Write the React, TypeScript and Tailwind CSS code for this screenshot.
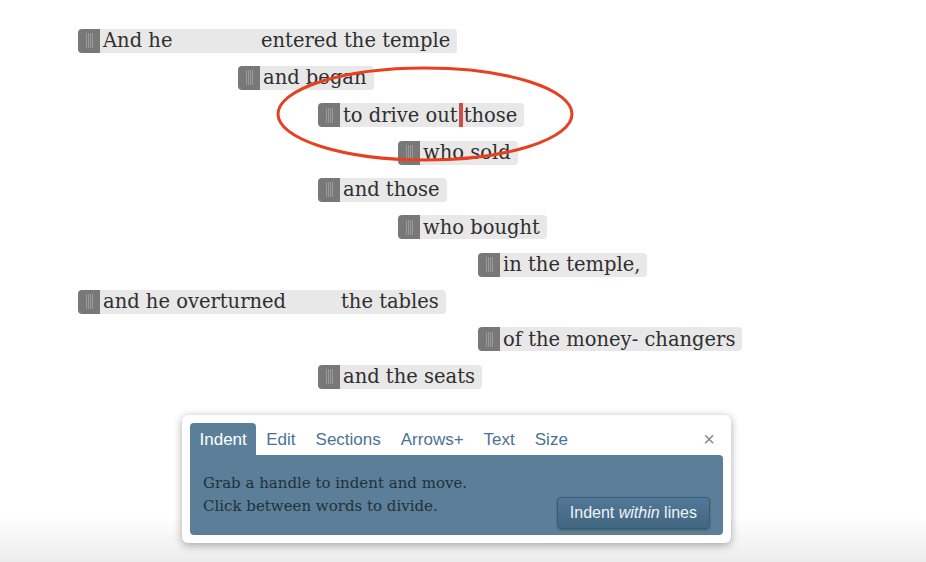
import React from "react";

const serif = { fontFamily: '"DejaVu Serif", Georgia, serif' };

function Handle() {
  return (
    <span className="flex h-6 w-[22px] shrink-0 items-center justify-center gap-px rounded-l-[4px] bg-[#787878]">
      <span className="h-[15px] w-px bg-[#9a9a9a]" />
      <span className="h-[15px] w-px bg-[#9a9a9a]" />
      <span className="h-[15px] w-px bg-[#9a9a9a]" />
      <span className="h-[15px] w-px bg-[#9a9a9a]" />
    </span>
  );
}

type Row = { level: number; parts: { text: React.ReactNode; w?: string }[] };

const rows: Row[] = [
  { level: 0, parts: [{ text: "And he", w: "w-[158px]" }, { text: "entered the temple" }] },
  { level: 2, parts: [{ text: "and began" }] },
  {
    level: 3,
    parts: [
      {
        text: (
          <span className="flex items-center">
            to drive out
            <span className="mx-[1px] inline-block h-6 w-[4px] bg-[#cf4d47]" />
            those
          </span>
        ),
      },
    ],
  },
  { level: 4, parts: [{ text: "who sold" }] },
  { level: 3, parts: [{ text: "and those" }] },
  { level: 4, parts: [{ text: "who bought" }] },
  { level: 5, parts: [{ text: "in the temple," }] },
  { level: 0, parts: [{ text: "and he overturned", w: "w-[238px]" }, { text: "the tables" }] },
  { level: 5, parts: [{ text: "of the money- changers" }] },
  { level: 3, parts: [{ text: "and the seats" }] },
];

const indents = ["pl-[78px]", "pl-[158px]", "pl-[238px]", "pl-[318px]", "pl-[398px]", "pl-[478px]"];

export default function App() {
  return (
    <div className="relative h-[562px] w-[926px] overflow-hidden bg-[linear-gradient(to_bottom,#ffffff_0%,#ffffff_92%,#ececec_100%)]">
      <div className="flex flex-col pt-[22px]">
        {rows.map((r, i) => (
          <div key={i} className={`flex h-[37.33px] items-center ${indents[r.level]}`}>
            <Handle />
            <span
              className="flex h-6 items-center rounded-r-[4px] bg-[#e8e8e8] pl-[3px] pr-[7px] text-[19.5px] leading-none text-[#2f2f2f]"
              style={serif}
            >
              {r.parts.map((p, j) => (
                <span key={j} className={`whitespace-pre ${p.w ?? ""}`}>
                  {p.text}
                </span>
              ))}
            </span>
          </div>
        ))}
      </div>

      {/* annotation ellipse */}
      <svg className="pointer-events-none absolute left-0 top-0" width="926" height="562">
        <ellipse cx="425" cy="114" rx="147" ry="46" fill="none" stroke="#e8401f" strokeWidth="3" />
      </svg>

      {/* tool panel */}
      <div className="ml-[182px] mt-[20px] w-[549px] rounded-[6px] bg-white p-2 shadow-[0_2px_9px_rgba(0,0,0,0.35)]">
        <div
          className="flex h-8 items-stretch text-[17px] text-[#4a7393]"
          style={{ fontFamily: '"Liberation Sans", Arial, sans-serif' }}
        >
          <div className="flex items-center rounded-t-[4px] bg-[#5b7f98] px-[9.5px] text-white">Indent</div>
          <div className="flex items-center px-[10px]">Edit</div>
          <div className="flex items-center px-[10px]">Sections</div>
          <div className="flex items-center px-[10px]">Arrows+</div>
          <div className="flex items-center px-[10px]">Text</div>
          <div className="flex items-center px-[10px]">Size</div>
          <div className="ml-auto flex items-center pr-[8px] text-[20px] text-[#8a8a8a]">×</div>
        </div>
        <div className="flex h-[80px] items-start justify-between rounded-b-[4px] rounded-tr-[4px] bg-[#5b7f98] pl-[13px] pr-[13px]">
          <div className="pt-[17px] text-[15px] leading-[23px] text-[#232f3a]" style={serif}>
            <div>Grab a handle to indent and move.</div>
            <div>Click between words to divide.</div>
          </div>
          <div
            className="mt-[42px] flex h-8 items-center rounded-[4px] border border-[#3b5b72] bg-[linear-gradient(to_bottom,#52789a,#41667f)] px-[12px] text-[16px] text-[#eef3f6] shadow-[0_1px_2px_rgba(0,0,0,0.3)]"
            style={{ fontFamily: '"Liberation Sans", Arial, sans-serif' }}
          >
            <span>
              Indent <i>within</i> lines
            </span>
          </div>
        </div>
      </div>
    </div>
  );
}
